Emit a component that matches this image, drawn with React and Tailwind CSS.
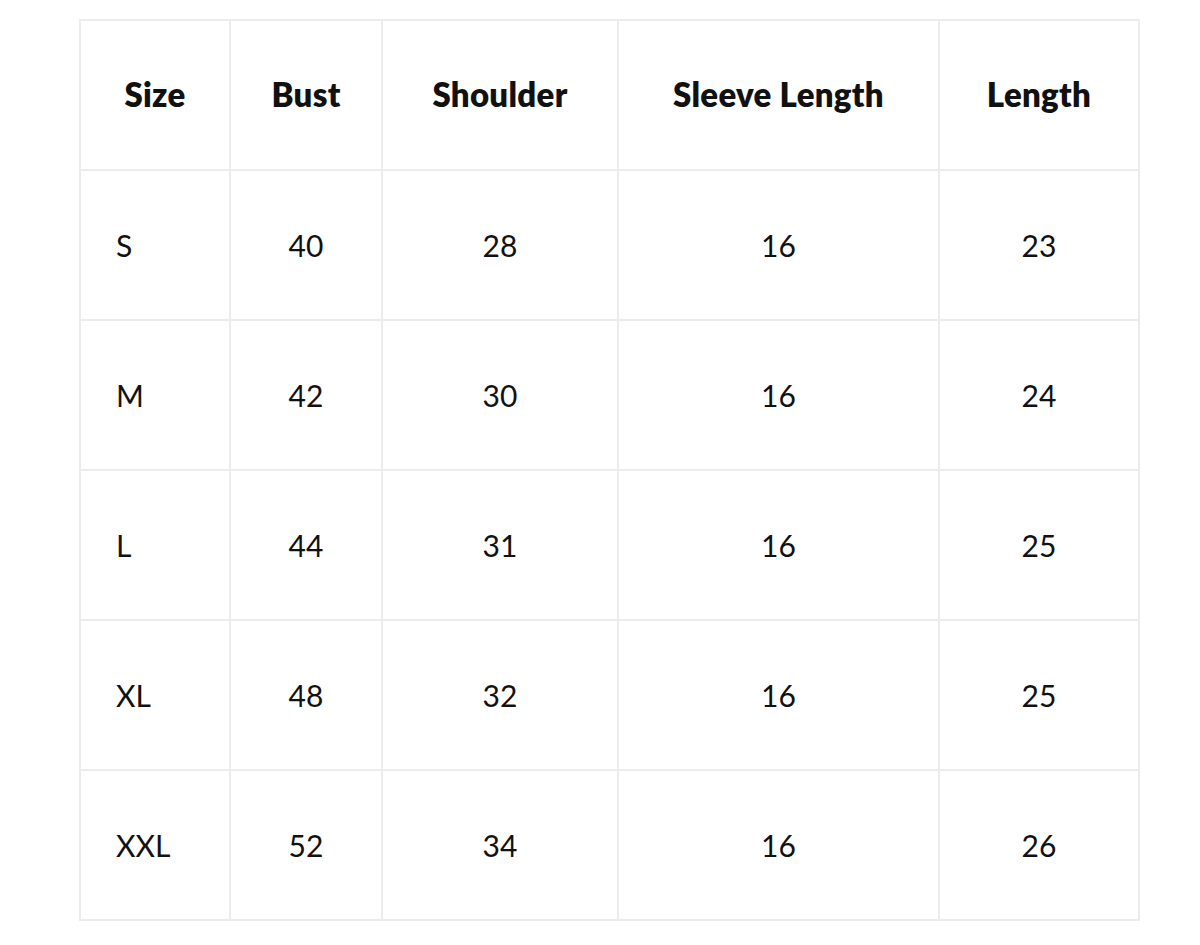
const headers = ["Size", "Bust", "Shoulder", "Sleeve Length", "Length"];

const rows = [
  ["S", 40, 28, 16, 23],
  ["M", 42, 30, 16, 24],
  ["L", 44, 31, 16, 25],
  ["XL", 48, 32, 16, 25],
  ["XXL", 52, 34, 16, 26],
];

const widths = ["w-[150px]", "w-[152px]", "w-[236px]", "w-[321px]", "w-[200px]"];

export default function App() {
  return (
    <div className="min-h-[945px] bg-white pt-[19px] pl-[79px] font-['Lato','Liberation_Sans',sans-serif] text-[#111]">
      <table className="w-[1059px] table-fixed border-collapse">
        <thead>
          <tr className="h-[150px]">
            {headers.map((h, i) => (
              <th
                key={h}
                className={`${widths[i]} border-2 border-[#ececec] text-center text-[33px] font-extrabold tracking-[0.3px]`}
              >
                {h}
              </th>
            ))}
          </tr>
        </thead>
        <tbody>
          {rows.map((row) => (
            <tr key={row[0]} className="h-[150px]">
              {row.map((cell, i) => (
                <td
                  key={i}
                  className={
                    i === 0
                      ? "border-2 border-[#ececec] pl-[35px] text-left text-[30px]"
                      : "border-2 border-[#ececec] text-center text-[30px]"
                  }
                >
                  {cell}
                </td>
              ))}
            </tr>
          ))}
        </tbody>
      </table>
    </div>
  );
}
